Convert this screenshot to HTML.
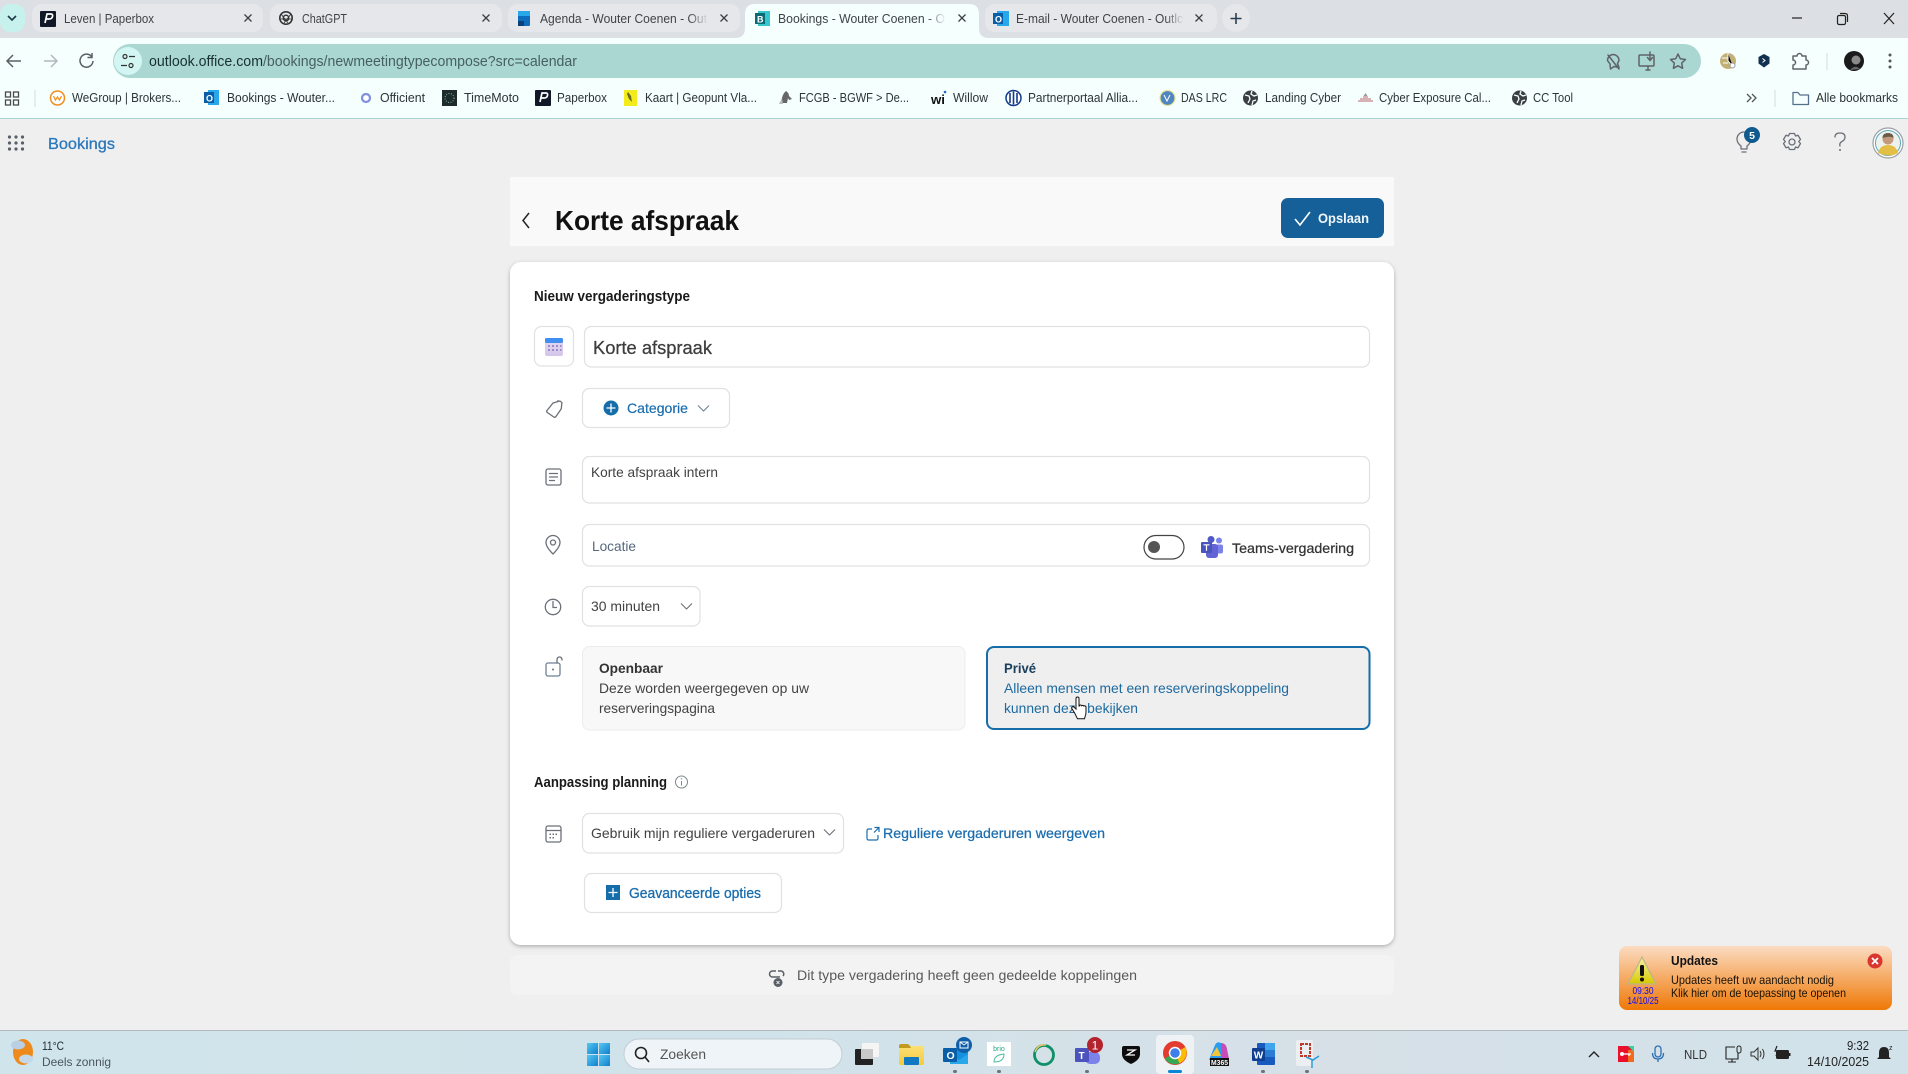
<!DOCTYPE html>
<html lang="nl"><head><meta charset="utf-8"><title>Bookings</title>
<style>
html,body{margin:0;padding:0;background:#efefef;width:1908px;height:1074px;overflow:hidden}
svg{display:block;font-family:"Liberation Sans",sans-serif;filter:blur(.3px)}
.tab{font-size:12.5px;fill:#3f4347}
.bm{font-size:12.5px;fill:#2c3436}
.m{font-size:14px;fill:#424242}
.b{font-weight:700}
.bl{fill:#1a6dae}
.ic{fill:none;stroke:#5f6368;stroke-width:1.5;stroke-linecap:round;stroke-linejoin:round}
.fi{fill:none;stroke:#6b7078;stroke-width:1.3;stroke-linecap:round;stroke-linejoin:round}
.box{fill:#fff;stroke:#e1e1e1;stroke-width:1.2}
</style></head><body>
<svg width="1908" height="1074" viewBox="0 0 1908 1074" xmlns="http://www.w3.org/2000/svg">
<defs>
<linearGradient id="tg" x1="0" y1="0" x2="0" y2="1"><stop offset="0" stop-color="#fbdcc2"/><stop offset="1" stop-color="#ef7806"/></linearGradient>
<linearGradient id="tb" x1="0" y1="0" x2="1" y2="0"><stop offset="0" stop-color="#cfe4eb"/><stop offset=".4" stop-color="#d1e3ea"/><stop offset=".7" stop-color="#d7e0e7"/><stop offset="1" stop-color="#d1e2ea"/></linearGradient>
<linearGradient id="yg" x1="0" y1="0" x2="0" y2="1"><stop offset="0" stop-color="#f8f2a0"/><stop offset="1" stop-color="#d8c800"/></linearGradient>
<linearGradient id="fold" x1="0" y1="0" x2="0" y2="1"><stop offset="0" stop-color="#fbe27a"/><stop offset="1" stop-color="#f6c93e"/></linearGradient>
<linearGradient id="win" x1="0" y1="0" x2="1" y2="1"><stop offset="0" stop-color="#56c8f0"/><stop offset="1" stop-color="#0f7fd0"/></linearGradient>
<linearGradient id="cal" x1="0" y1="0" x2="0" y2="1"><stop offset="0" stop-color="#e4d9f2"/><stop offset="1" stop-color="#d4c5ea"/></linearGradient>
<linearGradient id="fa"><stop offset="0" stop-color="#e5e7eb" stop-opacity="0"/><stop offset="1" stop-color="#e5e7eb"/></linearGradient>
<linearGradient id="fb"><stop offset="0" stop-color="#f5fffe" stop-opacity="0"/><stop offset="1" stop-color="#f5fffe"/></linearGradient>
<filter id="sh" x="-5%" y="-5%" width="110%" height="110%"><feDropShadow dx="0" dy="1.5" stdDeviation="2" flood-color="#000" flood-opacity=".28"/></filter>
</defs>

<!-- page -->
<rect width="1908" height="1074" fill="#efefef"/>

<!-- tab strip -->
<rect width="1908" height="38" fill="#dcdfe3"/>
<rect x="0" y="4" width="25" height="28" rx="10" fill="#c6f1ec"/>
<path d="M8 16l4 4 4-4" fill="none" stroke="#1d3a44" stroke-width="1.600"/>
<rect x="32" y="4" width="231" height="28" rx="10" fill="#e5e7eb"/>
<rect x="270" y="4" width="232" height="28" rx="10" fill="#e5e7eb"/>
<rect x="508" y="4" width="232" height="28" rx="10" fill="#e5e7eb"/>
<path d="M735 38q10 0 10-10V14q0-10 10-10h214q10 0 10 10v14q0 10 10 10z" fill="#f5fffe"/>
<rect x="985" y="4" width="232" height="28" rx="10" fill="#e5e7eb"/>
<rect x="1222" y="4" width="28" height="28" rx="14" fill="#e5e7eb"/>

<rect x="40" y="11" width="16" height="16" rx="1" fill="#111827"/><path d="M45 23l2-9h4q2 0 1.500 2.500T49 19h-2.500" fill="none" stroke="#fff" stroke-width="1.700"/>
<text class="tab" x="64" y="23" textLength="90" lengthAdjust="spacingAndGlyphs">Leven | Paperbox</text>
<path d="M244.500 14.500l7 7M251.500 14.500l-7 7" stroke="#3c4043" stroke-width="1.300"/>

<circle cx="286" cy="18" r="6.200" fill="none" stroke="#333" stroke-width="1.600"/><circle cx="286" cy="18" r="2.800" fill="none" stroke="#333" stroke-width="1.300"/><path d="M281 14l7 9M291 14l-7 9M280 19h12" stroke="#333" stroke-width=".8"/>
<text class="tab" x="302" y="23" textLength="45" lengthAdjust="spacingAndGlyphs">ChatGPT</text>
<path d="M482.500 14.500l7 7M489.500 14.500l-7 7" stroke="#3c4043" stroke-width="1.300"/>

<rect x="518" y="11" width="12" height="15" rx="1" fill="#0f6cbd"/><rect x="518" y="11" width="12" height="5" fill="#28a8ea"/><rect x="518" y="21" width="6" height="5" fill="#0a3f7a"/>
<text class="tab" x="540" y="23" textLength="167" lengthAdjust="spacingAndGlyphs">Agenda - Wouter Coenen - Out</text>
<rect x="689" y="10" width="19" height="18" fill="url(#fa)"/>
<path d="M720.500 14.500l7 7M727.500 14.500l-7 7" stroke="#3c4043" stroke-width="1.300"/>

<rect x="758" y="11" width="12" height="15" fill="#37c6d0"/><rect x="755" y="13" width="10" height="11" fill="#0b6a73"/><text x="757" y="22.500" font-size="9" font-weight="700" fill="#fff">B</text>
<text class="tab" x="778" y="23" textLength="167" lengthAdjust="spacingAndGlyphs">Bookings - Wouter Coenen - O</text>
<rect x="927" y="10" width="19" height="18" fill="url(#fb)"/>
<path d="M958.500 14.500l7 7M965.500 14.500l-7 7" stroke="#3c4043" stroke-width="1.300"/>

<rect x="997" y="11" width="12" height="15" fill="#28a8ea"/><rect x="993" y="13" width="10" height="11" fill="#0a5ea8"/><text x="995" y="22.500" font-size="9" font-weight="700" fill="#fff">O</text>
<text class="tab" x="1016" y="23" textLength="167" lengthAdjust="spacingAndGlyphs">E-mail - Wouter Coenen - Outlc</text>
<rect x="1165" y="10" width="19" height="18" fill="url(#fa)"/>
<path d="M1195.500 14.500l7 7M1202.500 14.500l-7 7" stroke="#3c4043" stroke-width="1.300"/>
<path d="M1236 13v11M1230.500 18.500h11" stroke="#2d3f50" stroke-width="1.600"/>

<path d="M1792 18h10" stroke="#222" stroke-width="1.200"/>
<rect x="1837.500" y="15.500" width="8" height="9" rx="1.500" fill="none" stroke="#222" stroke-width="1.200"/><path d="M1840 13.500h5q2.500 0 2.500 2.500v6" fill="none" stroke="#222" stroke-width="1.200"/>
<path d="M1884 13l10 11M1894 13l-10 11" stroke="#222" stroke-width="1.200"/>

<!-- toolbar -->
<rect y="38" width="1908" height="80" fill="#f5fffe"/>
<rect y="118" width="1908" height="1" fill="#a9d6d2"/>
<path d="M21 61H8M13 55l-6 6 6 6" fill="none" stroke="#5a6065" stroke-width="1.500"/>
<path d="M44 61h12M51 55l6 6-6 6" fill="none" stroke="#b3b8bb" stroke-width="1.500"/>
<path d="M91.500 56.500a6.500 6.500 0 1 0 1.500 4.500M92 53v4.500h-4.500" fill="none" stroke="#5a6065" stroke-width="1.500"/>
<rect x="113" y="44" width="1588" height="34" rx="17" fill="#abd7d3"/>
<circle cx="128" cy="61" r="14" fill="#d3f6f3"/>
<circle cx="125" cy="56.500" r="2" fill="none" stroke="#333" stroke-width="1.200"/><path d="M129 56.500h6M121 65.500h6" stroke="#333" stroke-width="1.200"/><circle cx="131" cy="65.500" r="2" fill="none" stroke="#333" stroke-width="1.200"/>
<text x="149" y="66" font-size="15" fill="#173030" textLength="114" lengthAdjust="spacingAndGlyphs">outlook.office.com</text>
<text x="263" y="66" font-size="15" fill="#46605f" textLength="314" lengthAdjust="spacingAndGlyphs">/bookings/newmeetingtypecompose?src=calendar</text>

<!-- omnibox icons -->
<path d="M1608 55l11 14M1613 54.500a6 6 0 0 1 6 6l-1.500 3 1.500 4-5-1-3.500 2.500-.5-5-2.500-3.500a6 6 0 0 1 5.500-6z" class="ic"/>
<rect x="1639" y="55" width="15" height="11" rx="1" class="ic" fill="none"/><path d="M1646 70h4M1648 66v4" class="ic"/><path d="M1650 52v8M1647.500 57.500l2.500 3 2.500-3" class="ic" stroke="#5f6368"/>
<path d="M1678 54l2.300 4.800 5.200.7-3.800 3.600.9 5.200-4.600-2.500-4.600 2.500.9-5.200-3.800-3.600 5.200-.7z" class="ic"/>
<circle cx="1728" cy="61" r="8" fill="#c3b076"/><path d="M1728 53v8l5 6M1722 58h6M1723 63h5" stroke="#fff" stroke-width="1"/><circle cx="1732.500" cy="65.500" r="2.500" fill="#fff" stroke="#999"/>
<path d="M1764 54l5.500 3v6.500l-5.500 4-5.500-4V57z" fill="#12304f"/><path d="M1762.500 58.500l2.500 2-2.500 2" fill="none" stroke="#fff" stroke-width="1"/>
<path d="M1793 56h4a2.500 2.500 0 0 1 5 0h4v4a2.500 2.500 0 0 1 0 5v4h-13v-4a2.500 2.500 0 0 0 0-5z" class="ic" stroke="#4a5560"/>
<rect x="1826.500" y="53" width="1" height="17" fill="#d6dcdc"/>
<circle cx="1854" cy="61" r="10" fill="#1a1a1a"/><circle cx="1856" cy="60" r="4.500" fill="#8a8a8a"/><path d="M1850 70q5-6 10-1" fill="#666"/>
<circle cx="1890" cy="55" r="1.500" fill="#555"/><circle cx="1890" cy="61" r="1.500" fill="#555"/><circle cx="1890" cy="67" r="1.500" fill="#555"/>

<!-- bookmarks -->
<g fill="none" stroke="#4a4a4a" stroke-width="1.300"><rect x="5.500" y="92" width="5" height="5"/><rect x="13.500" y="92" width="5" height="5"/><rect x="5.500" y="100" width="5" height="5"/><rect x="13.500" y="100" width="5" height="5"/></g>
<rect x="34.500" y="90" width="1" height="17" fill="#d6dcdc"/>

<circle cx="57.500" cy="98" r="7" fill="#fff" stroke="#ef8f1f" stroke-width="1.500"/><path d="M53.500 96l2 4 2-3 2 3 2-4" fill="none" stroke="#ef8f1f" stroke-width="1.200"/>
<text class="bm" x="72" y="102" textLength="109" lengthAdjust="spacingAndGlyphs">WeGroup | Brokers...</text>
<rect x="208" y="90" width="11" height="15" fill="#28a8ea"/><rect x="204" y="92" width="10" height="11" fill="#0a5ea8"/><text x="206" y="101.500" font-size="9" font-weight="700" fill="#fff">O</text>
<text class="bm" x="227" y="102" textLength="108" lengthAdjust="spacingAndGlyphs">Bookings - Wouter...</text>
<circle cx="366" cy="98" r="4" fill="#fff" stroke="#7d8fe0" stroke-width="2.200"/>
<text class="bm" x="380" y="102" textLength="45" lengthAdjust="spacingAndGlyphs">Officient</text>
<rect x="442" y="90" width="15" height="16" fill="#1c2b2b"/><circle cx="449.500" cy="98" r="4.500" fill="none" stroke="#8fb09a" stroke-width="1" stroke-dasharray="1 1.500"/>
<text class="bm" x="464" y="102" textLength="55" lengthAdjust="spacingAndGlyphs">TimeMoto</text>
<rect x="535" y="90" width="16" height="16" rx="1" fill="#111827"/><path d="M540 102l2-9h4q2 0 1.500 2.500T544 98h-2.500" fill="none" stroke="#fff" stroke-width="1.700"/>
<text class="bm" x="557" y="102" textLength="50" lengthAdjust="spacingAndGlyphs">Paperbox</text>
<rect x="624" y="90" width="13" height="16" fill="#f2ec1c"/><path d="M628 92l3 4 1 6-3-3-2-5" fill="#6a6a20"/>
<text class="bm" x="645" y="102" textLength="112" lengthAdjust="spacingAndGlyphs">Kaart | Geopunt Vla...</text>
<path d="M781 103q1-9 5-12 3 2 3 5l3 3-3 1-1-2-1 5z" fill="#666"/><path d="M779 104l3-6 1 6z" fill="#bbb"/>
<text class="bm" x="799" y="102" textLength="110" lengthAdjust="spacingAndGlyphs">FCGB - BGWF &gt; De...</text>
<text x="931" y="104" font-size="13" font-weight="700" fill="#111" textLength="14" lengthAdjust="spacingAndGlyphs">wi</text><circle cx="945" cy="92" r="1.300" fill="#2467c8"/>
<text class="bm" x="953" y="102" textLength="35" lengthAdjust="spacingAndGlyphs">Willow</text>
<circle cx="1013.500" cy="98" r="7.500" fill="#fff" stroke="#113a8a" stroke-width="1.500"/><path d="M1010 93v10M1013.500 91.500v13M1017 93v10" stroke="#113a8a" stroke-width="1.600"/>
<text class="bm" x="1028" y="102" textLength="110" lengthAdjust="spacingAndGlyphs">Partnerportaal Allia...</text>
<circle cx="1167.500" cy="98" r="7.500" fill="#4f86c0" stroke="#e8e59a" stroke-width="1.200"/><path d="M1164 95l3 6 3-6" fill="none" stroke="#fff"/>
<text class="bm" x="1181" y="102" textLength="46" lengthAdjust="spacingAndGlyphs">DAS LRC</text>
<circle cx="1250.500" cy="98" r="7.500" fill="#3b3f43"/><path d="M1245 95l4 1 1 3-2 4M1252 91l-1 3 3 2 3-1M1252 105l1-4 3-1" fill="none" stroke="#f5fffe" stroke-width="1.300"/>
<text class="bm" x="1265" y="102" textLength="76" lengthAdjust="spacingAndGlyphs">Landing Cyber</text>
<path d="M1358 101h15M1360 99h11M1363 97h5" stroke="#b9666a" stroke-width="1"/><path d="M1365.500 93l2 3h-4z" fill="#999"/>
<text class="bm" x="1379" y="102" textLength="112" lengthAdjust="spacingAndGlyphs">Cyber Exposure Cal...</text>
<circle cx="1519.500" cy="98" r="7.500" fill="#3b3f43"/><path d="M1514 95l4 1 1 3-2 4M1521 91l-1 3 3 2 3-1M1521 105l1-4 3-1" fill="none" stroke="#f5fffe" stroke-width="1.300"/>
<text class="bm" x="1533" y="102" textLength="40" lengthAdjust="spacingAndGlyphs">CC Tool</text>
<path d="M1747 94l4 4-4 4M1752 94l4 4-4 4" fill="none" stroke="#555" stroke-width="1.300"/>
<rect x="1774.500" y="90" width="1" height="17" fill="#d6dcdc"/>
<path d="M1793 92.500h5l2 2.500h8.500v9.500h-15.500z" fill="none" stroke="#54708a" stroke-width="1.300" stroke-linejoin="round"/>
<text class="bm" x="1816" y="102" textLength="82" lengthAdjust="spacingAndGlyphs">Alle bookmarks</text>

<!-- app header -->
<g fill="#59606a"><circle cx="9.500" cy="137" r="1.600"/><circle cx="16" cy="137" r="1.600"/><circle cx="22.500" cy="137" r="1.600"/><circle cx="9.500" cy="143" r="1.600"/><circle cx="16" cy="143" r="1.600"/><circle cx="22.500" cy="143" r="1.600"/><circle cx="9.500" cy="149" r="1.600"/><circle cx="16" cy="149" r="1.600"/><circle cx="22.500" cy="149" r="1.600"/></g>
<text x="48" y="149" font-size="16" fill="#2b78bb" textLength="67" lengthAdjust="spacingAndGlyphs" style="stroke:#2b78bb;stroke-width:.3">Bookings</text>

<path d="M1741 146q-4-3-4-7a7 7 0 0 1 14 0q0 4-4 7v3h-6zM1742 152h4" class="fi"/>
<circle cx="1752" cy="135" r="8" fill="#0f5a8e"/><text x="1752" y="139" font-size="10.500" font-weight="700" fill="#fff" text-anchor="middle">5</text>
<circle cx="1792" cy="142" r="3" class="fi"/><path d="M1789.500 133.500h5l1 2.500 2.500-.8 2.500 4.300-1.800 2 1.800 2-2.500 4.300-2.500-.8-1 2.500h-5l-1-2.500-2.500.8-2.500-4.300 1.800-2-1.800-2 2.500-4.300 2.500.8z" class="fi"/>
<path d="M1835 137q0-4 5-4t5 4q0 3-3 4.500t-2 4.500" class="fi"/><circle cx="1840" cy="150" r="1" fill="#6b7078"/>
<g transform="translate(1 0)"><circle cx="1887" cy="143" r="15" fill="#fff" stroke="#9aa0a6" stroke-width="1.200"/><circle cx="1887" cy="143" r="12.500" fill="#eef2ee" stroke="#5aa9b9" stroke-width="1"/>
<circle cx="1887" cy="139" r="5.500" fill="#c49a7c"/><path d="M1881.500 138q0-5 5.500-5t5.500 5q-3-2.500-11 0z" fill="#6a5a4a"/><path d="M1877 153q2-8 10-8t10 8q-5 3-10 2.500t-10-2.500z" fill="#e3bf45"/></g>

<!-- page title strip -->
<rect x="510" y="177" width="884" height="69" fill="#f9f9f9"/>
<path d="M529 213l-6 7.500 6 7.500" fill="none" stroke="#222" stroke-width="1.500"/>
<text x="555" y="230" font-size="28" font-weight="700" fill="#111" textLength="184" lengthAdjust="spacingAndGlyphs">Korte afspraak</text>
<rect x="1281" y="198" width="103" height="40" rx="7" fill="#156099"/>
<path d="M1295 219l5 6 10-13" fill="none" stroke="#fff" stroke-width="1.600"/>
<text x="1318" y="223" font-size="14" font-weight="700" fill="#f1f6fa" textLength="51" lengthAdjust="spacingAndGlyphs">Opslaan</text>

<!-- main card -->
<rect x="510" y="262" width="884" height="683" rx="11" fill="#fff" filter="url(#sh)"/>
<text x="534" y="301" font-size="14.500" font-weight="700" fill="#1a1a1a" textLength="156" lengthAdjust="spacingAndGlyphs">Nieuw vergaderingstype</text>

<rect class="box" x="534.500" y="326.500" width="39" height="39.500" rx="7"/>
<rect x="545" y="338" width="18" height="18" rx="2" fill="url(#cal)"/><rect x="545" y="338" width="18" height="5" rx="1.500" fill="#3f8ef0"/>
<g fill="#9b8cc9"><rect x="548" y="345" width="2" height="2"/><rect x="552" y="345" width="2" height="2"/><rect x="556" y="345" width="2" height="2"/><rect x="560" y="345" width="1.500" height="2"/><rect x="548" y="349" width="2" height="2"/><rect x="552" y="349" width="2" height="2"/><rect x="556" y="349" width="2" height="2"/><rect x="560" y="349" width="1.500" height="2"/></g>
<rect class="box" x="584.500" y="326.500" width="785" height="40.500" rx="7"/>
<text x="593" y="354" font-size="18" fill="#3d3d3d" textLength="119" lengthAdjust="spacingAndGlyphs" style="stroke:#3d3d3d;stroke-width:.25">Korte afspraak</text>

<path d="M553 403l-6 7.500a1.500 1.500 0 0 0 .3 2l6.500 4.500a1.500 1.500 0 0 0 2-.3l5.500-8 .6-6.200-2-1.500z" class="fi" stroke="#8a7a6a"/><circle cx="558" cy="401" r=".9" fill="#6b7078"/>
<rect class="box" x="582.500" y="388.500" width="147" height="39" rx="7"/>
<circle cx="611" cy="408" r="7.500" fill="#156ea9"/><path d="M611 403.500v9M606.500 408h9" stroke="#fff" stroke-width="1.300"/>
<text class="bl" x="627" y="413" font-size="14" textLength="61" lengthAdjust="spacingAndGlyphs" style="stroke:#1a6dae;stroke-width:.2">Categorie</text>
<path d="M698 405.500l5.500 5.500 5.500-5.500" fill="none" stroke="#6e7f90" stroke-width="1.100"/>

<rect x="546" y="469" width="15" height="16" rx="2" class="fi" stroke="#6e8196"/><path d="M549.500 473.500h8M549.500 477h8M549.500 480.500h5" class="fi"/>
<rect class="box" x="582.500" y="456.500" width="787" height="46.500" rx="7"/>
<text class="m" x="591" y="477" textLength="127" lengthAdjust="spacingAndGlyphs">Korte afspraak intern</text>

<path d="M553 554q-7-7-7-11.500a7 7 0 0 1 14 0q0 4.500-7 11.500z" class="fi"/><circle cx="553" cy="542.500" r="2.500" class="fi"/>
<rect class="box" x="582.500" y="524.500" width="787" height="41.500" rx="7"/>
<text x="592" y="551" font-size="14" fill="#56687c" textLength="44" lengthAdjust="spacingAndGlyphs">Locatie</text>
<rect x="1144" y="535.500" width="40" height="23.500" rx="11.700" fill="#fff" stroke="#444" stroke-width="1.200"/><circle cx="1154" cy="547" r="6" fill="#555"/>
<circle cx="1219" cy="540.500" r="3" fill="#7b83eb"/><circle cx="1211" cy="539.500" r="3.500" fill="#5059c9"/><rect x="1215" y="544.500" width="8" height="9" rx="2" fill="#7b83eb"/><rect x="1206" y="544" width="12" height="14" rx="3" fill="#6264d4"/><rect x="1201" y="542" width="11" height="11" rx="1" fill="#4b53bc"/><path d="M1203.500 544.800h6M1206.500 544.800v6" stroke="#fff" stroke-width="1.200"/>
<text x="1232" y="553" font-size="14" fill="#333" textLength="122" lengthAdjust="spacingAndGlyphs" style="stroke:#333;stroke-width:.25">Teams-vergadering</text>

<circle cx="553" cy="607" r="7.700" class="fi"/><path d="M553 601.500v6h3.500" class="fi"/>
<rect class="box" x="582.500" y="586.500" width="117.500" height="39.500" rx="7"/>
<text class="m" x="591" y="611" textLength="69" lengthAdjust="spacingAndGlyphs">30 minuten</text>
<path d="M681 603.500l5.500 5.500 5.500-5.500" fill="none" stroke="#6b7078" stroke-width="1.100"/>

<rect x="546" y="663" width="14" height="13" rx="2" fill="none" stroke="#6e8196" stroke-width="1.300"/><path d="M557 663v-3q0-3 2.500-3t2.500 3" class="fi"/><circle cx="553" cy="669.500" r="1" fill="#6b7078"/>
<rect x="582.500" y="646.500" width="382.500" height="83.500" rx="7" fill="#f8f8f8" stroke="#ececec"/>
<text x="599" y="673" font-size="14" font-weight="700" fill="#333" textLength="64" lengthAdjust="spacingAndGlyphs">Openbaar</text>
<text class="m" x="599" y="693" textLength="210" lengthAdjust="spacingAndGlyphs">Deze worden weergegeven op uw</text>
<text class="m" x="599" y="713" textLength="116" lengthAdjust="spacingAndGlyphs">reserveringspagina</text>

<rect x="987" y="647" width="382.500" height="82" rx="7" fill="#efefef" stroke="#156ea9" stroke-width="2"/>
<text x="1004" y="673" font-size="14" font-weight="700" fill="#19405f" textLength="32" lengthAdjust="spacingAndGlyphs">Privé</text>
<text x="1004" y="693" font-size="14" fill="#1c6aa0" textLength="285" lengthAdjust="spacingAndGlyphs">Alleen mensen met een reserveringskoppeling</text>
<text x="1004" y="713" font-size="14" fill="#1c6aa0" textLength="134" lengthAdjust="spacingAndGlyphs">kunnen deze bekijken</text>
<path d="M1076 698.500a1.500 1.500 0 0 1 3 0v8l.5-1a1.300 1.300 0 0 1 2.200.3 1.300 1.300 0 0 1 2.200.3 1.300 1.300 0 0 1 2.100.7v5q0 3-1 5l-.5 2h-7l-3-6-2.500-4a1.300 1.300 0 0 1 2-1.700l2 2z" fill="#fff" stroke="#111" stroke-width="1"/>

<text x="534" y="787" font-size="14.500" font-weight="700" fill="#1a1a1a" textLength="133" lengthAdjust="spacingAndGlyphs">Aanpassing planning</text>
<circle cx="681.500" cy="782" r="6" fill="none" stroke="#7a8a8a" stroke-width="1"/><path d="M681.500 781v4.500" stroke="#7a8a8a"/><circle cx="681.500" cy="778.800" r=".7" fill="#7a8a8a"/>

<rect x="546" y="826" width="15" height="16" rx="2" class="fi" stroke="#6e8196"/><path d="M546.500 830.500h14" class="fi"/><g fill="#6b7078"><rect x="549.500" y="833.500" width="1.500" height="1.500"/><rect x="552.500" y="833.500" width="1.500" height="1.500"/><rect x="555.500" y="833.500" width="1.500" height="1.500"/><rect x="549.500" y="837" width="1.500" height="1.500"/><rect x="552.500" y="837" width="1.500" height="1.500"/></g>
<rect class="box" x="582.500" y="813.500" width="261" height="39.500" rx="7"/>
<text class="m" x="591" y="838" textLength="224" lengthAdjust="spacingAndGlyphs">Gebruik mijn reguliere vergaderuren</text>
<path d="M824 829.500l5.500 5.500 5.500-5.500" fill="none" stroke="#6b7078" stroke-width="1.100"/>
<path d="M872 829h-3.500a1.500 1.500 0 0 0-1.500 1.500v8a1.500 1.500 0 0 0 1.500 1.500h8a1.500 1.500 0 0 0 1.500-1.500V835M874.500 827.500h4.500v4.500M879 827.500l-5 5" fill="none" stroke="#1a6dae" stroke-width="1.200"/>
<text class="bl" x="883" y="838" font-size="14" textLength="222" lengthAdjust="spacingAndGlyphs" style="stroke:#1a6dae;stroke-width:.25">Reguliere vergaderuren weergeven</text>

<rect class="box" x="584.500" y="873.500" width="197" height="39" rx="7"/>
<rect x="606" y="885" width="14" height="15" fill="#156ea9"/><path d="M613 888v9M608.500 892.500h9" stroke="#fff" stroke-width="1.300"/>
<text class="bl" x="629" y="898" font-size="14.500" textLength="132" lengthAdjust="spacingAndGlyphs" style="stroke:#1a6dae;stroke-width:.3">Geavanceerde opties</text>

<!-- footer strip -->
<rect x="510" y="955" width="884" height="40" rx="7" fill="#f3f3f3"/>
<path d="M776 971h-3.500a3 3 0 0 0 0 6H780M778 971h3a3 3 0 0 1 2 5" fill="none" stroke="#5a6068" stroke-width="1.500"/><circle cx="778" cy="982.500" r="4.500" fill="#5a6068"/><path d="M776.500 981l3 3M779.500 981l-3 3" stroke="#fff" stroke-width=".8"/>
<text x="797" y="980" font-size="14" fill="#595959" textLength="340" lengthAdjust="spacingAndGlyphs">Dit type vergadering heeft geen gedeelde koppelingen</text>

<!-- toast -->
<rect x="1619" y="946" width="273" height="64" rx="8" fill="url(#tg)"/>
<path d="M1642 957l14 27h-28z" fill="url(#yg)" stroke="#b9b58a" stroke-width="1.200"/>
<rect x="1640" y="965" width="4" height="11" rx="1.500" fill="#111"/><circle cx="1642" cy="979.500" r="2" fill="#111"/>
<text x="1643" y="994" font-size="10" fill="#0a0aff" text-anchor="middle" textLength="21" lengthAdjust="spacingAndGlyphs">09:30</text>
<text x="1643" y="1004" font-size="10" fill="#0a0aff" text-anchor="middle" textLength="31" lengthAdjust="spacingAndGlyphs">14/10/25</text>
<text x="1671" y="965" font-size="13" font-weight="700" fill="#111" textLength="47" lengthAdjust="spacingAndGlyphs">Updates</text>
<text x="1671" y="984" font-size="12" fill="#1a1205" textLength="163" lengthAdjust="spacingAndGlyphs">Updates heeft uw aandacht nodig</text>
<text x="1671" y="997" font-size="12" fill="#1a1205" textLength="175" lengthAdjust="spacingAndGlyphs">Klik hier om de toepassing te openen</text>
<circle cx="1875" cy="961" r="7.500" fill="#d9362f"/><path d="M1872 958l6 6M1878 958l-6 6" stroke="#fff" stroke-width="1.800"/>

<!-- taskbar -->
<rect y="1030" width="1908" height="44" fill="url(#tb)"/>
<rect y="1030" width="1908" height="1" fill="#b2b9bd"/>
<ellipse cx="23" cy="1052" rx="10" ry="13" fill="#ee8a1c"/><ellipse cx="18" cy="1045" rx="7" ry="4.500" fill="#b9cfe6"/><ellipse cx="26" cy="1059" rx="7" ry="4.500" fill="#c4d8ea"/>
<text x="42" y="1050" font-size="12" fill="#1e2a30" textLength="22" lengthAdjust="spacingAndGlyphs">11°C</text>
<text x="42" y="1066" font-size="12" fill="#4a565c" textLength="69" lengthAdjust="spacingAndGlyphs">Deels zonnig</text>

<g fill="url(#win)"><rect x="587" y="1043" width="11" height="11"/><rect x="599" y="1043" width="11" height="11"/><rect x="587" y="1055" width="11" height="11"/><rect x="599" y="1055" width="11" height="11"/></g>
<rect x="624" y="1039" width="218" height="30" rx="15" fill="#eff4f8" stroke="#c2cdd3"/>
<circle cx="641" cy="1053" r="5.500" fill="none" stroke="#222" stroke-width="1.600"/><path d="M645 1057l4 5" stroke="#222" stroke-width="1.600"/>
<text x="660" y="1059" font-size="14" fill="#555" textLength="46" lengthAdjust="spacingAndGlyphs">Zoeken</text>

<rect x="862" y="1043" width="17" height="14" rx="1" fill="#f5f5f5"/><rect x="855" y="1049" width="18" height="16" rx="1" fill="#222"/><rect x="861" y="1049" width="12" height="10" fill="#c9c9c9"/>
<path d="M899 1046a2 2 0 0 1 2-2h7l2 2h12a2 2 0 0 1 2 2v15a2 2 0 0 1-2 2h-21a2 2 0 0 1-2-2z" fill="url(#fold)"/><path d="M899 1048v-2a2 2 0 0 1 2-2h7l2 2 1 2z" fill="#c29a1e"/><rect x="904" y="1057" width="15" height="8" rx="1" fill="#1179c2"/>
<rect x="950" y="1048" width="18" height="16" fill="#1490df"/><path d="M950 1054l9 6 9-6v10h-18z" fill="#28a8ea"/><rect x="943" y="1048" width="14" height="14" rx="1" fill="#0a5ea8"/><text x="946.500" y="1059" font-size="10.500" font-weight="700" fill="#fff">O</text>
<circle cx="964" cy="1045" r="8" fill="#0f5fa8"/><rect x="960" y="1042" width="8" height="6" fill="none" stroke="#fff"/><path d="M960 1042l4 3 4-3" fill="none" stroke="#fff" stroke-width=".8"/>
<rect x="987" y="1042" width="24" height="24" fill="#fff"/><text x="999" y="1051" font-size="7" fill="#25a884" text-anchor="middle">brio</text><path d="M994 1062q0-7 10-8 0 8-10 8z" fill="none" stroke="#4bbf9d"/>
<circle cx="1044" cy="1055" r="9.500" fill="none" stroke="#0f9068" stroke-width="2.800"/><path d="M1035 1052q3-8 11-7" fill="none" stroke="#f0c660" stroke-width="1.500"/>
<circle cx="1092" cy="1048" r="3.500" fill="#7b83eb"/><rect x="1085" y="1052" width="15" height="12" rx="5" fill="#7b83eb"/><rect x="1075" y="1048" width="14" height="14" rx="1" fill="#4b53bc"/><text x="1078.500" y="1059" font-size="10" font-weight="700" fill="#fff">T</text>
<circle cx="1095" cy="1045" r="8" fill="#b3232e"/><text x="1095" y="1049.500" font-size="12" fill="#fff" text-anchor="middle">1</text>
<path d="M1124 1046h14q2 0 2 2v6q0 6-9 10-9-4-9-10v-6q0-2 2-2z" fill="#0d0d0d"/><path d="M1127 1050h8l-8 5h8" fill="none" stroke="#fff" stroke-width="1.300"/>
<rect x="1156" y="1035" width="38" height="39" rx="4" fill="#eef2f5"/>
<circle cx="1175" cy="1053" r="12" fill="#e33b2e"/><path d="M1175 1053l10.400-6a12 12 0 0 1-6 16.400z" fill="#fbbc05"/><path d="M1175 1053l4.400 10.400a12 12 0 0 1-14.800-5z" fill="#34a853"/><circle cx="1175" cy="1053" r="5.500" fill="#3f7fe8" stroke="#fff" stroke-width="1.500"/>
<rect x="1168" y="1070" width="14" height="3" rx="1.500" fill="#0a84d6"/>
<path d="M1209 1060l6-15q2-4 6-2l7 17z" fill="#2a9df0"/><path d="M1221 1043q5 0 6 6l2 10h-7z" fill="#c74bb9"/><path d="M1211 1056l6-9 4 9z" fill="#f2c43a"/>
<rect x="1210" y="1058" width="19" height="8" fill="#111"/><text x="1219.500" y="1065" font-size="7" font-weight="700" fill="#fff" text-anchor="middle" textLength="17" lengthAdjust="spacingAndGlyphs">M365</text>
<rect x="1257" y="1043" width="18" height="22" rx="1" fill="#185abd"/><rect x="1265" y="1043" width="10" height="7" fill="#41a5ee"/><rect x="1265" y="1050" width="10" height="7" fill="#2b7cd3"/><rect x="1252" y="1048" width="13" height="13" rx="1" fill="#103f91"/><text x="1258.500" y="1058.500" font-size="10" font-weight="700" fill="#fff" text-anchor="middle">W</text>
<rect x="1296" y="1040" width="17" height="26" rx="2" fill="#eceff1"/><rect x="1301" y="1044" width="9" height="12" fill="none" stroke="#c0392b" stroke-width="2" stroke-dasharray="3 1"/><path d="M1306 1057l7 3 6-4M1312 1060v8" fill="none" stroke="#2a9dd6" stroke-width="1.500"/>

<g fill="#6d7478"><rect x="953" y="1070" width="4" height="3" rx="1.500"/><rect x="997" y="1070" width="4" height="3" rx="1.500"/><rect x="1085" y="1070" width="4" height="3" rx="1.500"/><rect x="1261" y="1070" width="4" height="3" rx="1.500"/><rect x="1305" y="1070" width="4" height="3" rx="1.500"/></g>

<!-- tray -->
<path d="M1589 1057l5-5 5 5" fill="none" stroke="#222" stroke-width="1.400"/>
<rect x="1618" y="1046" width="16" height="16" fill="#e8102a"/><rect x="1628" y="1050" width="6" height="12" fill="#f26a1b"/><path d="M1628 1046h6v6z" fill="#3bcf9a"/><circle cx="1622" cy="1054" r="2" fill="#fff"/><path d="M1623 1054h8M1629 1054v2" stroke="#fff" stroke-width="1.300"/>
<rect x="1655" y="1046" width="6" height="11" rx="3" fill="none" stroke="#2d6fb5" stroke-width="1.300"/><path d="M1652.500 1053q0 6 5.500 6t5.500-6M1658 1059v3" fill="none" stroke="#2d6fb5" stroke-width="1.300"/>
<text x="1684" y="1059" font-size="13" fill="#333" textLength="23" lengthAdjust="spacingAndGlyphs">NLD</text>
<path d="M1735 1047h-9v12h12v-6M1732 1059v3M1728 1062h8" fill="none" stroke="#222" stroke-width="1.100"/><rect x="1737" y="1046" width="4" height="7" rx="2" fill="none" stroke="#222" stroke-width="1"/>
<path d="M1751 1052h3l4-4v12l-4-4h-3zM1760 1051q2 3 0 6M1762.500 1049q3 5 0 10" fill="none" stroke="#333" stroke-width="1"/>
<rect x="1776" y="1050" width="13" height="9" rx="1.500" fill="#222"/><rect x="1789" y="1053" width="1.500" height="3" fill="#222"/><path d="M1777 1046l-2 5h3l-2 5" fill="none" stroke="#222" stroke-width="1.200"/>
<text x="1869" y="1050" font-size="12.500" fill="#222" text-anchor="end" textLength="22" lengthAdjust="spacingAndGlyphs">9:32</text>
<text x="1869" y="1066" font-size="12.500" fill="#222" text-anchor="end" textLength="62" lengthAdjust="spacingAndGlyphs">14/10/2025</text>
<path d="M1884 1047q-5 0-5 6v4l-2 2h14l-2-2v-4q0-6-5-6zM1882 1061h4" fill="#222"/><text x="1889" y="1050" font-size="7" fill="#222">z</text>
</svg>
</body></html>
